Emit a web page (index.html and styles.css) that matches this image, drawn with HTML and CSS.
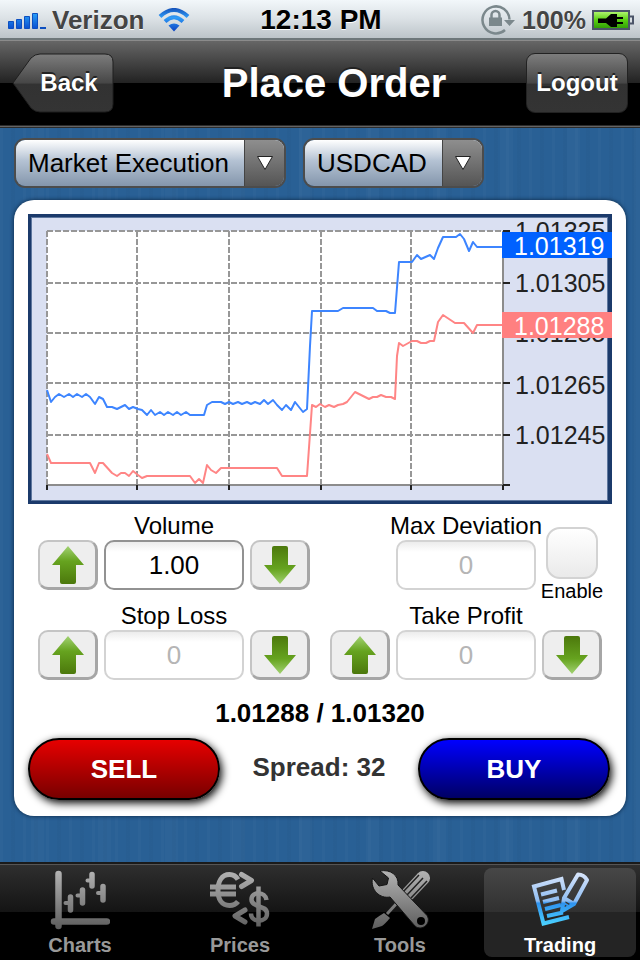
FILE: index.html
```html
<!DOCTYPE html>
<html lang="en">
<head>
<meta charset="utf-8">
<meta name="viewport" content="width=device-width, initial-scale=1">
<title>Place Order</title>
<link rel="stylesheet" href="styles.css">
</head>
<body>
<svg class="defs" width="0" height="0" aria-hidden="true">
  <defs>
    <linearGradient id="green" x1="0" y1="0" x2="0" y2="1"><stop offset="0" stop-color="#a2d272"/><stop offset=".4" stop-color="#66a31f"/><stop offset="1" stop-color="#4c780c"/></linearGradient>
    <linearGradient id="steel" gradientUnits="userSpaceOnUse" x1="0" y1="0" x2="0" y2="60"><stop offset="0" stop-color="#b4b4b4"/><stop offset="1" stop-color="#5c5c5c"/></linearGradient>
    <linearGradient id="sky" gradientUnits="userSpaceOnUse" x1="0" y1="4" x2="0" y2="56"><stop offset="0" stop-color="#d6e4fb"/><stop offset=".52" stop-color="#8fbdf2"/><stop offset=".56" stop-color="#2f93f0"/><stop offset="1" stop-color="#4cd4ff"/></linearGradient>
    <linearGradient id="signal" x1="0" y1="0" x2="0" y2="1"><stop offset="0" stop-color="#28a0f8"/><stop offset="1" stop-color="#0a4fd0"/></linearGradient>
    <linearGradient id="wave" gradientUnits="userSpaceOnUse" x1="0" y1="0" x2="0" y2="24"><stop offset="0" stop-color="#1450b8"/><stop offset=".4" stop-color="#2f9cf8"/><stop offset="1" stop-color="#0a3fc0"/></linearGradient>
    <linearGradient id="charge" x1="0" y1="0" x2="0" y2="1"><stop offset="0" stop-color="#b8f878"/><stop offset=".5" stop-color="#58d010"/><stop offset="1" stop-color="#2e9a08"/></linearGradient>
    <linearGradient id="chrome" x1="0" y1="0" x2="0" y2="1"><stop offset="0" stop-color="#7d7d7d"/><stop offset=".5" stop-color="#464646"/><stop offset=".52" stop-color="#323232"/><stop offset="1" stop-color="#343434"/></linearGradient>
    <symbol id="arrow" viewBox="0 0 32 38"><path fill="url(#green)" d="M16 0 32 19H24V36Q24 38 22 38H10Q8 38 8 36V19H0Z"/></symbol>
  </defs>
</svg>

<div class="status">
  <div class="status-left">
    <svg class="signal" width="38" height="20" viewBox="0 0 38 20" aria-hidden="true">
      <g fill="url(#signal)" stroke="#0d4fc0"><path d="M.5 10.500h5v7h-5zM8.500 8.500h5v9h-5zM16.500 5.500h5v12h-5zM24.500 2.500h5v15h-5z"/></g>
      <path fill="#0d4fc0" d="M32 16h6v2h-6z"/>
    </svg>
    <span>Verizon</span>
    <svg class="wifi" width="32" height="24" viewBox="0 0 32 24" aria-hidden="true">
      <g fill="none" stroke="url(#wave)" stroke-width="4"><path d="M2 8.500Q16-4.500 30 8.500M7 13.500Q16 5 25 13.500"/></g>
      <path fill="url(#wave)" d="M10.500 17.500Q16 13.500 21.500 17.500L16 23.500Z"/>
    </svg>
  </div>
  <time class="clock">12:13 PM</time>
  <div class="status-right">
    <svg width="36" height="32" viewBox="0 0 36 32" aria-hidden="true">
      <g fill="none" stroke="#7b888c" stroke-width="2.500"><path d="M29.500 15.500A13.500 13.500 0 1 0 25 26"/><path d="M11.500 14V11a4 4 0 0 1 8 0v3"/></g>
      <path fill="#7b888c" d="M9 13.500h13V22H9zM24 16h11l-5.500 6z"/>
    </svg>
    <span>100%</span>
    <svg width="42" height="20" viewBox="0 0 42 20" aria-hidden="true">
      <rect x="1" y="1" width="36" height="18" fill="url(#charge)" stroke="#4b5468" stroke-width="2"/>
      <path fill="none" stroke="#4b5468" stroke-width="2" d="M38 6.500h3v7h-3"/>
      <path fill="#000" d="M6 8.500h8L19 4h6v3h6v2h-6v3h6v2h-6v3h-6l-5-4H6z"/>
    </svg>
  </div>
</div>

<header class="header">
  <button class="back" type="button">
    <svg class="back-shape" viewBox="0 0 102 60" preserveAspectRatio="none" aria-hidden="true"><path fill="url(#chrome)" stroke="#1f1f1f" d="M1 30 19 5Q23 1 28 1H93Q101 1 101 9V51Q101 59 93 59H28Q23 59 19 55Z"/></svg>
    <span>Back</span>
  </button>
  <h1>Place Order</h1>
  <button class="logout" type="button">Logout</button>
</header>

<main class="main">
  <div class="pickers">
    <div class="picker">
      <select aria-label="Order type"><option>Market Execution</option></select>
      <span class="picker-arrow"><svg width="16" height="14" viewBox="0 0 16 14" aria-hidden="true"><path fill="#fff" stroke="#222" d="M.500.500h15L8 13.500z"/></svg></span>
    </div>
    <div class="picker">
      <select aria-label="Symbol"><option>USDCAD</option></select>
      <span class="picker-arrow"><svg width="16" height="14" viewBox="0 0 16 14" aria-hidden="true"><path fill="#fff" stroke="#222" d="M.500.500h15L8 13.500z"/></svg></span>
    </div>
  </div>

  <section class="card">
    <svg class="chart" viewBox="28 214 584 290" role="img" aria-label="USDCAD bid and ask prices">
      <rect x="28" y="214" width="584" height="290" fill="#1b3a6b"/>
      <rect x="31" y="217" width="577" height="284" fill="#5f789f"/>
      <rect x="32" y="218" width="575" height="282" fill="#dae0f2"/>
      <rect x="47" y="231" width="456" height="254" fill="#fff"/>
      <g stroke="#979797" stroke-width="2" stroke-dasharray="6 2">
        <path d="M47 231H503M47 283H503M47 333H503M47 383H503M47 435H503"/>
        <path d="M47 231V485M137 231V485M229 231V485M321 231V485M411 231V485"/>
      </g>
      <path fill="none" stroke="#8c8c8c" stroke-width="2" d="M47 485H503V231"/>
      <path stroke="#222" stroke-width="2" d="M503 231h7M503 283h7M503 333h7M503 383h7M503 435h7M503 485h7M47 485v5M137 485v5M229 485v5M321 485v5M411 485v5M503 485v5"/>
      <polyline class="ask" points="47,390 51,402 55,397 59,394 64,397 69,394 73,397 77,394 82,397 86,394 90,397 95,404 99,397 103,399 107,407 112,407 117,409 125,405 129,409 133,407 138,409 142,410 147,415 151,410 155,415 160,412 164,415 168,412 173,415 177,412 181,415 186,412 190,415 204,415 207,405 212,402 221,402 225,404 229,402 233,404 238,402 242,404 247,402 251,404 255,402 260,404 264,400 268,404 273,400 277,405 282,410 286,405 291,410 295,402 299,407 303,412 307,409 310,346 312,311 338,311 343,308 373,308 377,311 386,311 390,313 395,313 399,262 412,262 417,255 421,259 430,255 434,259 438,248 443,237 456,237 460,234 464,239 469,251 473,242 477,247 503,247"/>
      <polyline class="bid" points="47,454 51,463 90,463 95,473 99,463 103,463 112,473 117,476 121,473 125,473 129,476 133,471 138,475 142,478 147,476 190,476 195,483 199,479 203,483 207,465 211,470 216,473 221,468 277,468 282,476 307,476 312,405 316,407 320,404 325,407 329,405 334,407 338,405 343,404 347,402 355,392 369,399 373,397 377,397 381,395 386,397 391,397 395,399 397,356 399,343 403,346 412,341 417,341 421,343 426,343 430,341 434,341 438,322 443,315 455,323 464,323 473,333 477,325 503,325"/>
      <g class="axis">
        <text x="515" y="240">1.01325</text>
        <text x="515" y="292">1.01305</text>
        <text x="515" y="342">1.01285</text>
        <text x="515" y="394">1.01265</text>
        <text x="515" y="444">1.01245</text>
      </g>
      <rect x="502" y="232" width="110" height="26" fill="#0061ff"/>
      <rect x="502" y="312" width="110" height="26" fill="#ff8080"/>
      <g class="axis tag">
        <text x="514" y="255">1.01319</text>
        <text x="514" y="335">1.01288</text>
      </g>
    </svg>

    <form class="fields">
      <div class="field">
        <label for="volume">Volume</label>
        <button class="step" type="button" aria-label="Increase volume"><svg width="32" height="38"><use href="#arrow"/></svg></button>
        <input id="volume" class="value" type="text" value="1.00">
        <button class="step down" type="button" aria-label="Decrease volume"><svg width="32" height="38"><use href="#arrow"/></svg></button>
      </div>
      <div class="field">
        <label for="deviation">Max Deviation</label>
        <input id="deviation" class="value" type="text" value="0" disabled>
        <div class="enable">
          <input id="enable" type="checkbox">
          <label for="enable">Enable</label>
        </div>
      </div>
      <div class="field">
        <label for="stop">Stop Loss</label>
        <button class="step" type="button" aria-label="Increase stop loss"><svg width="32" height="38"><use href="#arrow"/></svg></button>
        <input id="stop" class="value" type="text" value="0" disabled>
        <button class="step down" type="button" aria-label="Decrease stop loss"><svg width="32" height="38"><use href="#arrow"/></svg></button>
      </div>
      <div class="field">
        <label for="profit">Take Profit</label>
        <button class="step" type="button" aria-label="Increase take profit"><svg width="32" height="38"><use href="#arrow"/></svg></button>
        <input id="profit" class="value" type="text" value="0" disabled>
        <button class="step down" type="button" aria-label="Decrease take profit"><svg width="32" height="38"><use href="#arrow"/></svg></button>
      </div>
    </form>

    <p class="quote">1.01288 / 1.01320</p>
    <div class="actions">
      <button class="trade sell" type="button">SELL</button>
      <p class="spread">Spread: 32</p>
      <button class="trade buy" type="button">BUY</button>
    </div>
  </section>
</main>

<nav class="tabs">
  <a class="tab" href="#charts">
    <svg width="60" height="60" viewBox="0 0 60 60" fill="none" stroke="url(#steel)" stroke-linecap="round" aria-hidden="true">
      <path stroke-width="6.500" d="M8.500 4V56M4 51.500H57"/>
      <path stroke-width="5.500" d="M20.500 27V40M32.500 20V33M42 4.500V16M53 16.500V30"/>
      <path stroke-width="4" d="M15.500 33H20M27.500 25.500H32M37.500 10.500H42M48 23H53"/>
    </svg>
    <span>Charts</span>
  </a>
  <a class="tab" href="#prices">
    <svg width="60" height="60" viewBox="0 0 60 60" fill="none" stroke="url(#steel)" aria-hidden="true">
      <path stroke-width="5" d="M28 9.500Q25 4.500 19.500 4.500C11.500 4.500 8 12 8 20.500S11.500 35.500 19.500 35.500Q25 35.500 28 31.500"/>
      <path stroke-width="5" d="M0 17L26 17.010M0 24L26 24.010"/>
      <path stroke-width="5" stroke-linecap="round" stroke-linejoin="round" d="M31.500 4.500 41.500 10.500 31.500 16.500M35 40 25 46 35 52"/>
      <path stroke-width="4.500" d="M56.500 30C55.500 21.500 41.500 21 41.500 29.500C41.500 38 57 34.500 57 43.500C57 53 41 53 41 43.500"/>
      <path stroke-width="4.500" d="M48.500 16.500 48.510 56.500"/>
    </svg>
    <span>Prices</span>
  </a>
  <a class="tab" href="#tools">
    <svg width="60" height="60" viewBox="0 0 60 60" aria-hidden="true">
      <path fill="none" stroke="url(#steel)" stroke-width="14" stroke-linecap="round" d="M53 8 38 24"/>
      <path fill="none" stroke="#202020" stroke-width="1.500" d="M49 5 33 22M53 8 37 25M57 11 41 28"/>
      <path fill="none" stroke="url(#steel)" stroke-width="3" d="M27 33 17 44"/>
      <path fill="url(#steel)" d="M14 43 20 48Q15 54 12 56L2 59 5 49Q9 46 14 43Z"/>
      <path fill="url(#steel)" stroke="#141414" d="M10 1C20-1 29 5 28 15L57 45.500C62 53 52 62 45 56L20 27C10 29 0 20 2.500 8L9 16 17 14.500 18.500 8Z"/>
      <circle cx="51" cy="51" r="4" fill="#000"/>
    </svg>
    <span>Tools</span>
  </a>
  <a class="tab active" href="#trading" aria-current="page">
    <svg width="60" height="60" viewBox="0 0 60 60" fill="none" stroke="url(#sky)" aria-hidden="true">
      <path stroke-width="4" d="M34 20 31.500 9 4 16.500 13.500 53.500 39 47"/>
      <path stroke-width="4" d="M11 24.500 27 20.500M13 32 29 28M15 39 31 35M17 46 33 42.500"/>
      <path stroke-width="4" stroke-linejoin="round" d="M48 4.500Q54 4.500 57 10L44 34 32 41 34 28ZM34 28 44 34"/>
      <path stroke-width="2" d="M34 33 38 35.500"/>
    </svg>
    <span>Trading</span>
  </a>
</nav>
</body>
</html>
```
FILE: styles.css
```css
* { box-sizing: border-box; }

body {
  margin: 0;
  min-height: 100vh;
  display: flex;
  flex-direction: column;
  background: #000;
  font-family: "Liberation Sans", Arial, sans-serif;
  color: #000;
}

h1, p { margin: 0; }
button, input, select { font-family: inherit; }
svg { display: block; flex: none; }
.defs { position: absolute; }

.status {
  height: 40px;
  padding: 2px 6px 0 8px;
  display: grid;
  grid-template-columns: 1fr auto 1fr;
  align-items: center;
  background: linear-gradient(#f2f7fa, #dbe1e5 50%, #bcc4c9);
  border-bottom: 2px solid #6d777a;
  font-size: 26px;
  font-weight: bold;
  color: #444;
  text-shadow: 0 1px 0 #fff;
}
.status-left, .status-right { display: flex; align-items: center; gap: 6px; }
.status-right { justify-content: flex-end; font-size: 25px; }
.signal { margin-top: 2px; }
.wifi { margin-left: 8px; }
.clock { font-size: 28px; color: #000; }

.header {
  height: 88px;
  padding: 16px 12px 16px;
  display: flex;
  align-items: center;
  background: linear-gradient(#666, #222 50%, #000 50%);
  border-top: 1px solid #8b8b8b;
  border-bottom: 3px double #2c2c2c;
}
.header h1 {
  flex: 1;
  padding-left: 28px;
  text-align: center;
  font-size: 40px;
  line-height: 44px;
  color: #fff;
  text-shadow: 0 -2px 0 #222;
}
.header button {
  width: 102px;
  height: 60px;
  flex: none;
  padding: 0;
  border: 0;
  background: none;
  color: #fff;
  font-size: 24px;
  font-weight: bold;
  text-shadow: 0 -2px 0 #222;
}
.header .logout {
  border: 1px solid #222;
  border-radius: 9px;
  background: linear-gradient(#7d7d7d, #464646 50%, #323232 52%, #343434);
}
.header .back { position: relative; padding-left: 12px; }
.back-shape { position: absolute; inset: 0; width: 100%; height: 100%; }
.back span { position: relative; }

.main {
  flex: 1;
  padding: 10px 14px 46px;
  background:
    repeating-linear-gradient(90deg, rgba(255, 255, 255, .02) 0 3px, transparent 3px 11px, rgba(0, 0, 0, .02) 11px 15px, transparent 15px 23px),
    repeating-linear-gradient(90deg, transparent 0 31px, rgba(255, 255, 255, .02) 31px 44px, transparent 44px 67px),
    #296095;
}

.pickers { display: flex; gap: 17px; }
.picker {
  position: relative;
  border: 2px solid #4c4c4c;
  border-radius: 11px;
  overflow: hidden;
}
.picker select {
  display: block;
  height: 46px;
  padding: 0 55px 0 12px;
  border: 0;
  appearance: none;
  background: linear-gradient(#fff, #b4c2d3 45%, #8496ac);
  color: #000;
  font-size: 26px;
}
.picker-arrow {
  position: absolute;
  inset: 0 0 0 auto;
  width: 40px;
  display: grid;
  place-items: center;
  background: linear-gradient(#8e8e8e, #555);
  border-left: 1px solid #444;
  pointer-events: none;
}

.card {
  margin-top: 12px;
  padding: 14px 14px 16px;
  background: #fff;
  border-radius: 20px;
  box-shadow: 0 0 4px #0a2440;
}

.chart { width: 100%; height: auto; }
.ask, .bid { fill: none; stroke-width: 2; stroke-linejoin: round; }
.ask { stroke: #3d85ff; }
.bid { stroke: #ff8585; }
.axis { font-size: 25px; fill: #222; }
.tag { fill: #fff; }

.fields {
  padding: 9px 10px 0;
  display: grid;
  grid-template-columns: auto auto;
  justify-content: space-between;
  row-gap: 13px;
}
.field {
  display: grid;
  grid-template-columns: 60px 140px 60px;
  grid-template-rows: 27px 50px;
  column-gap: 6px;
}
.field > label {
  grid-area: 1 / 2;
  justify-self: center;
  white-space: nowrap;
  font-size: 24px;
  line-height: 26px;
}
.value {
  grid-area: 2 / 2;
  width: 100%;
  border: 2px solid #929292;
  border-radius: 10px;
  background: linear-gradient(#ececec, #fff 10px);
  text-align: center;
  font-size: 26px;
  color: #000;
}
.value:disabled { border-color: #d3d3d3; color: #b5b5b5; }
.step {
  grid-area: 2 / 1;
  padding: 0;
  display: grid;
  place-items: center;
  border: 2px solid #c4c4c4;
  border-right: 3px solid #a6a6a6;
  border-bottom: 3px solid #a6a6a6;
  border-radius: 10px;
  background: #eee;
}
.step.down { grid-area: 2 / 3; }
.down svg { transform: rotate(180deg); }

.enable {
  grid-area: 1 / 3 / 3 / 4;
  margin: 14px 0 -14px;
  display: flex;
  flex-direction: column;
  align-items: center;
}
.enable input {
  appearance: none;
  width: 52px;
  height: 52px;
  margin: 0;
  border: 2px solid #d3d3d3;
  border-radius: 14px;
  background: linear-gradient(#fff, #eaeaea);
}
.enable label { font-size: 20px; line-height: 24px; }

.quote {
  margin: 18px 0 10px;
  text-align: center;
  font-size: 26px;
  line-height: 30px;
  font-weight: bold;
}
.actions {
  padding-right: 2px;
  display: flex;
  justify-content: space-between;
}
.spread {
  font-size: 26px;
  line-height: 58px;
  font-weight: bold;
  color: #333;
}
.trade {
  width: 192px;
  height: 62px;
  padding: 0;
  border: 2px solid #000;
  border-radius: 31px;
  color: #fff;
  font-size: 26px;
  font-weight: bold;
  box-shadow: 2px 3px 8px #000;
}
.sell { background: linear-gradient(#e60000, #780000); }
.buy { background: linear-gradient(#0000ff, #000064); }

.tabs {
  height: 98px;
  padding: 4px 4px 4px;
  display: grid;
  grid-template-columns: repeat(4, 1fr);
  gap: 8px;
  background: linear-gradient(#2f2f2f, #141414 48px, #000 48px);
  border-top: 2px solid #1a1a1a;
  box-shadow: inset 0 1px 0 #555;
}
.tab {
  padding-top: 2px;
  display: flex;
  flex-direction: column;
  align-items: center;
  border-radius: 8px;
  color: #999;
  font-size: 20px;
  line-height: 24px;
  font-weight: bold;
  text-decoration: none;
}
.tab span { margin-top: 3px; }
.tab.active {
  background: linear-gradient(#474747, #303030 50%, #242424 50%);
  color: #fff;
}
```
